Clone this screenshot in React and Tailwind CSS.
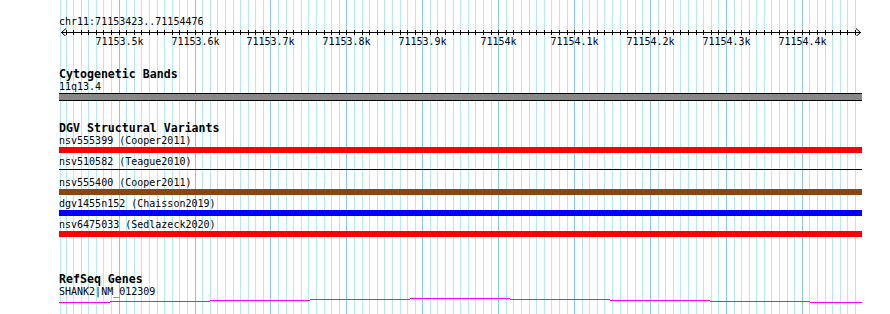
const START = 71153423;
const END = 71154476;
const X0 = 60.7;
const SCALE = 0.7591;
const LEFT = 59;

const bpToX = bp => X0 + (bp - START) * SCALE;

const gridBps = [];
for (let b = Math.ceil(START / 10) * 10; b <= END; b += 10) gridBps.push(b);
const majorBps = gridBps.filter(b => b % 100 === 0);

const variants = [
  { name: 'nsv555399 (Cooper2011)', kind: 'bar', color: 'bg-[#ff0000]' },
  { name: 'nsv510582 (Teague2010)', kind: 'line' },
  { name: 'nsv555400 (Cooper2011)', kind: 'bar', color: 'bg-[#8b4513]' },
  { name: 'dgv1455n152 (Chaisson2019)', kind: 'bar', color: 'bg-[#0000ff]' },
  { name: 'nsv6475033 (Sedlazeck2020)', kind: 'bar', color: 'bg-[#ff0000]' },
];

// stepped transcript line: [x1, x2, y] in svg coords (svg top = 298)
const geneSteps = [
  [59, 110, 5], [110, 210, 4], [210, 310, 3], [310, 410, 2], [410, 510, 1],
  [510, 610, 2], [610, 710, 3], [710, 810, 4], [810, 862, 5],
];

function Grid() {
  return (
    <svg className="absolute left-0 top-0" width="890" height="314">
      <rect x="60" y="0" width="1" height="314" fill="#b0ecef" />
      {gridBps.map(b => (
        <rect
          key={b}
          x={Math.floor(bpToX(b))}
          y="0"
          width="1"
          height="314"
          fill={b % 100 === 0 ? '#86c8ec' : '#b0ecef'}
        />
      ))}
    </svg>
  );
}

function Ruler() {
  return (
    <div className="pt-[16px]">
      <div className="h-[12px] leading-[12px] text-[10px]">chr11:71153423..71154476</div>
      <svg className="block -ml-[59px]" width="890" height="8">
        <rect x="61" y="4" width="800" height="1" fill="#000" />
        <polyline points="66,0.5 61.5,4.5 66,8.5" fill="none" stroke="#000" strokeWidth="1" />
        <polyline points="856,0.5 860.5,4.5 856,8.5" fill="none" stroke="#000" strokeWidth="1" />
        {gridBps.map(b => (
          <rect key={b} x={Math.floor(bpToX(b))} y="2" width="1" height="5" fill="#000" />
        ))}
      </svg>
      <div className="relative h-[12px] leading-[12px] text-[10px]">
        {majorBps.map(b => (
          <span
            key={b}
            className="absolute top-0 -translate-x-1/2 whitespace-nowrap"
            style={{ left: Math.floor(bpToX(b)) + 0.5 - LEFT }}
          >
            {b / 1000}k
          </span>
        ))}
      </div>
    </div>
  );
}

function TrackTitle({ children }) {
  return <div className="h-[14px] leading-[14px] text-[11.6px] font-bold">{children}</div>;
}

function Label({ children }) {
  return <div className="h-[11px] leading-[11px] text-[10px] whitespace-nowrap">{children}</div>;
}

export default function App() {
  return (
    <div className="relative w-[890px] h-[314px] overflow-hidden bg-white text-black font-['DejaVu_Sans_Mono','Liberation_Mono',monospace]">
      <Grid />
      <div className="relative pl-[59px]">
        <Ruler />

        {/* Cytogenetic Bands */}
        <div className="mt-[19px]">
          <TrackTitle>Cytogenetic Bands</TrackTitle>
          <Label>11q13.4</Label>
          <div className="mt-[1px] w-[803px] h-[8px] border-y border-black bg-[#888888]" />
        </div>

        {/* DGV Structural Variants */}
        <div className="mt-[20px]">
          <TrackTitle>DGV Structural Variants</TrackTitle>
          {variants.map(v => (
            <div key={v.name} className="h-[21px]">
              <Label>{v.name}</Label>
              <div className="mt-[1px] h-[6px] w-[803px]">
                {v.kind === 'bar' ? (
                  <div className={`h-[6px] w-[803px] ${v.color}`} />
                ) : (
                  <div className="mt-[2px] h-[1px] w-[803px] bg-black" />
                )}
              </div>
            </div>
          ))}
        </div>

        {/* RefSeq Genes */}
        <div className="mt-[32px]">
          <TrackTitle>RefSeq Genes</TrackTitle>
          <Label>SHANK2|NM_012309</Label>
          <svg className="block -ml-[59px]" width="890" height="8">
            {geneSteps.map(([x1, x2, y]) => (
              <rect key={x1} x={x1} y={y} width={x2 - x1} height="1" fill="#ff00ff" />
            ))}
          </svg>
        </div>
      </div>
    </div>
  );
}
